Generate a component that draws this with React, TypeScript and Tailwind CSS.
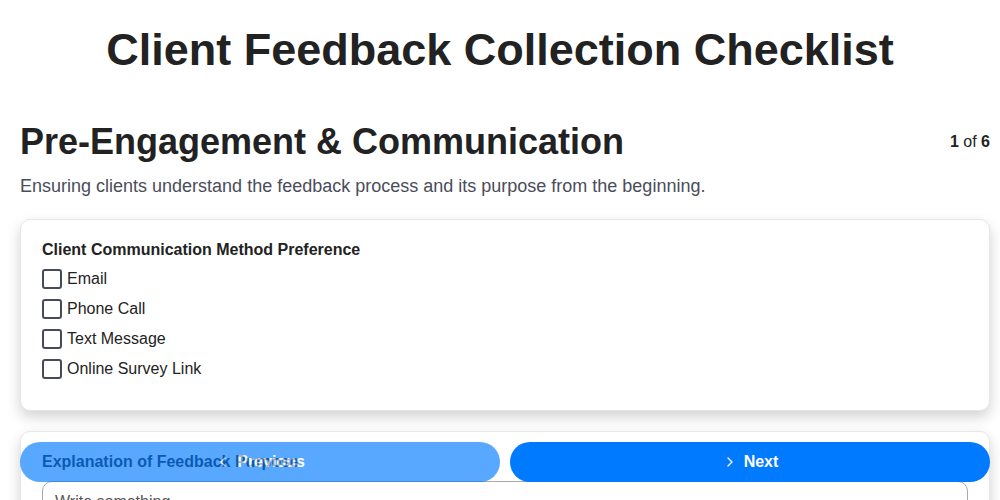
import React, { useState } from 'react';
import { ChevronLeft, ChevronRight } from 'lucide-react';

const methods = ['Email', 'Phone Call', 'Text Message', 'Online Survey Link'];

export default function App() {
  const [checked, setChecked] = useState<Record<string, boolean>>({});
  const [notes, setNotes] = useState('');

  return (
    <div className="min-h-screen bg-white text-[#222] font-['Liberation_Sans',Arial,sans-serif]">
      <h1 className="px-5 pt-[23px] text-center text-[45px] leading-[54px] font-bold">
        Client Feedback Collection Checklist
      </h1>

      <div className="pl-5 pr-2.5 pb-24">
        <div className="mt-[43px] flex items-center justify-between">
          <h2 className="text-4xl leading-[43px] font-bold">Pre-Engagement &amp; Communication</h2>
          <div className="text-base">
            <span className="font-bold">1</span> of <span className="font-bold">6</span>
          </div>
        </div>
        <p className="mt-[10px] text-lg leading-[27px] text-[#4a4d5a]">
          Ensuring clients understand the feedback process and its purpose from the beginning.
        </p>

        <div className="mt-[19px] flex flex-col gap-[20px]">
          {/* Communication method */}
          <div className="rounded-[10px] border border-[#e6e6ec] bg-white px-[21px] pt-[21px] pb-[26px] shadow-[0_6px_14px_rgba(0,0,0,0.18)]">
            <div className="text-base leading-[18px] font-bold">Client Communication Method Preference</div>
            <div className="mt-[5px] flex flex-col">
              {methods.map((m) => (
                <label key={m} className="flex h-[30px] items-center gap-[5px] cursor-pointer">
                  <button
                    type="button"
                    onClick={() => setChecked({ ...checked, [m]: !checked[m] })}
                    className={`h-5 w-5 rounded-[3px] border-2 ${checked[m] ? 'bg-[#007aff] border-[#007aff]' : 'bg-white border-[#474a5a]'}`}
                  />
                  <span className="text-base">{m}</span>
                </label>
              ))}
            </div>
          </div>

          {/* Explanation */}
          <div className="rounded-[10px] border border-[#e6e6ec] bg-white px-[21px] pt-[21px] pb-[26px] shadow-[0_6px_14px_rgba(0,0,0,0.18)]">
            <div className="text-base leading-[18px] font-bold">Explanation of Feedback Purpose</div>
            <textarea
              value={notes}
              onChange={(e) => setNotes(e.target.value)}
              placeholder="Write something..."
              rows={4}
              className="mt-[10px] block w-full resize-none rounded-[10px] border border-[#a9a9b0] px-3 py-2 text-base placeholder:text-[#555] outline-none"
            />
          </div>
        </div>
      </div>

      <div className="fixed bottom-[18px] left-5 right-2.5 flex gap-2.5">
        <button className="flex h-10 flex-1 items-center justify-center gap-1.5 rounded-full bg-[#007aff] text-base font-bold text-white opacity-65">
          <ChevronLeft className="h-4 w-4" />
          Previous
        </button>
        <button className="flex h-10 flex-1 items-center justify-center gap-1.5 rounded-full bg-[#007aff] text-base font-bold text-white">
          <ChevronRight className="h-4 w-4" />
          Next
        </button>
      </div>
    </div>
  );
}
